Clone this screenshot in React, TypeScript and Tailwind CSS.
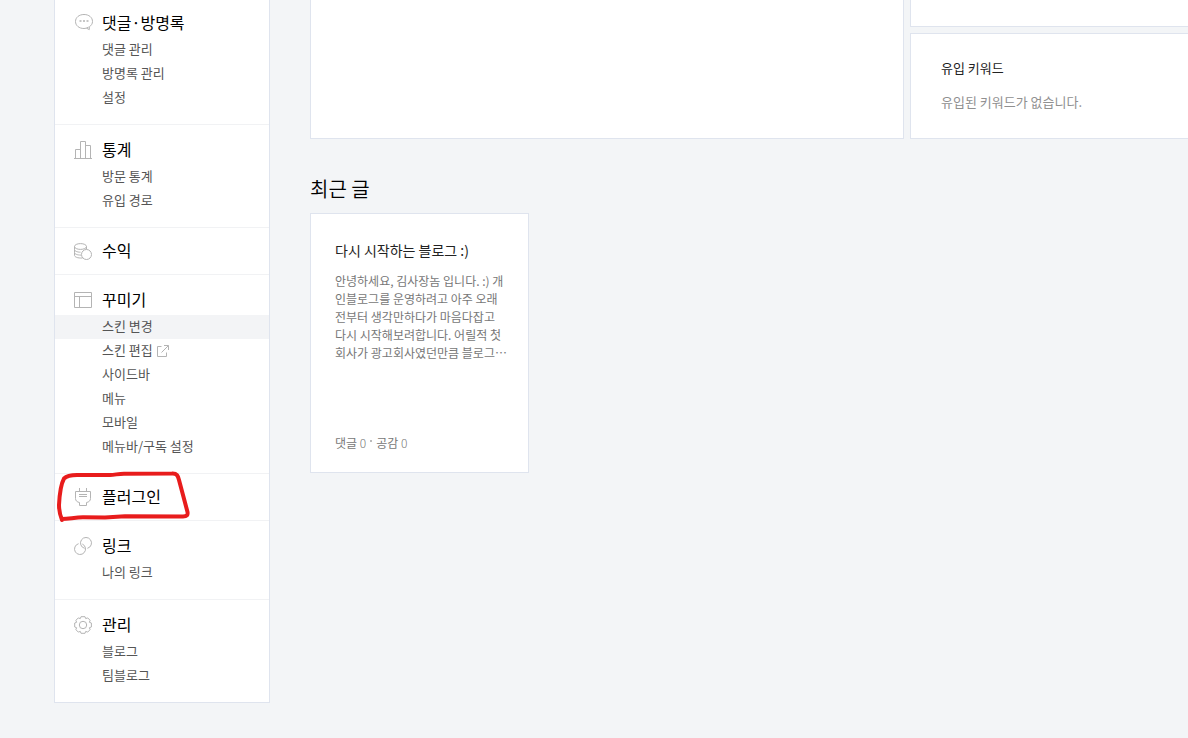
import type { ReactNode } from 'react'
import clsx from 'clsx'

type MenuItem = {
  label: string
  active?: boolean
  external?: boolean
}

type MenuGroup = {
  title: string
  icon: ReactNode
  items: MenuItem[]
  marked?: boolean
}

const Icon = ({ children }: { children: ReactNode }) => (
  <svg
    width="18"
    height="18"
    viewBox="0 0 18 18"
    fill="none"
    stroke="#b4b4b4"
    aria-hidden="true"
    className="shrink-0 overflow-visible"
  >
    {children}
  </svg>
)

const CommentIcon = () => (
  <Icon>
    <path d="M14.6 13.1C13.1 14 11.6 14.5 10 14.5C5 14.5 1.500 11.500 1.500 7.500C1.500 3.500 5 .5 10 .5C15 .5 18.500 3.500 18.500 7.500C18.500 9.800 17.300 11.500 15.300 12.800V15.600L12.500 14.200" />
    <path d="M5.500 7h2M9 7h2M12.500 7h2" strokeWidth="1.5" />
  </Icon>
)

const StatsIcon = () => (
  <Icon>
    <path d="M0 17.5h18M1.5 17.5v-9h5M6.5 17.5v-17h5v17M11.5 4.500h5v13" />
  </Icon>
)

const CoinsIcon = () => (
  <Icon>
    <ellipse cx="6.5" cy="4.5" rx="6" ry="2.9" />
    <path d="M.5 4.500v3c0 1.500 2.700 2.700 6 2.700M12.500 4.500v2.500" />
    <path d="M.5 7.500v3c0 1.400 2.600 2.600 6.500 2.600M.5 10.500v2.800c0 1.600 3 3 8 2.700" />
    <circle cx="12.5" cy="12.500" r="5" />
  </Icon>
)

const LayoutIcon = () => (
  <Icon>
    <path d="M.5 1.5h17v15H.5zM.5 5.5h17M5.5 5.5v11" />
  </Icon>
)

const PlugIcon = () => (
  <Icon>
    <path d="M5.5 0v3.5M12.5 0v3.5M1.5 3.5h15v7c0 2.200-1.600 3.600-4 4v3h-7v-3c-2.400-.4-4-1.800-4-4zM5 6.5h8M5 8.5h8" />
  </Icon>
)

const LinkIcon = () => (
  <Icon>
    <path d="M10.600 11.300A5.500 5.500 0 1 1 13.400 11.300" />
    <path d="M8.300 7A5.500 5.500 0 1 1 4.600 6.700" />
  </Icon>
)

const GearIcon = () => (
  <Icon>
    <path
      strokeLinejoin="round"
      d="M7 .7h4l.7 1.9 2-.7 2.4 2.4-.7 2 2 .7v4l-2 .7.7 2-2.4 2.4-2-.7-.7 1.9H7l-.7-1.9-2 .7-2.4-2.4.7-2L.7 11V7l1.9-.7-.7-2 2.4-2.4 2 .7z"
    />
    <circle cx="9" cy="9" r="3.7" />
  </Icon>
)

const ExternalIcon = () => (
  <svg width="12" height="12" viewBox="0 0 12 12" fill="none" stroke="#b4b4b4" aria-hidden="true">
    <path d="M4.5 1.5h-4v10h9v-4M7 .5h4.5V5M11.3.7L4.5 7.5" />
  </svg>
)

const menu: MenuGroup[] = [
  {
    title: '댓글·방명록',
    icon: <CommentIcon />,
    items: [{ label: '댓글 관리' }, { label: '방명록 관리' }, { label: '설정' }],
  },
  {
    title: '통계',
    icon: <StatsIcon />,
    items: [{ label: '방문 통계' }, { label: '유입 경로' }],
  },
  { title: '수익', icon: <CoinsIcon />, items: [] },
  {
    title: '꾸미기',
    icon: <LayoutIcon />,
    items: [
      { label: '스킨 변경', active: true },
      { label: '스킨 편집', external: true },
      { label: '사이드바' },
      { label: '메뉴' },
      { label: '모바일' },
      { label: '메뉴바/구독 설정' },
    ],
  },
  { title: '플러그인', icon: <PlugIcon />, items: [], marked: true },
  { title: '링크', icon: <LinkIcon />, items: [{ label: '나의 링크' }] },
  {
    title: '관리',
    icon: <GearIcon />,
    items: [{ label: '블로그' }, { label: '팀블로그' }],
  },
]

/* Hand-drawn red outline around a menu entry */
const Marker = () => (
  <svg
    width="140"
    height="60"
    viewBox="0 0 140 60"
    fill="none"
    stroke="#e81c1c"
    strokeWidth="4"
    strokeLinecap="round"
    strokeLinejoin="round"
    aria-hidden="true"
    className="pointer-events-none absolute -top-1.5 left-0 z-10"
  >
    <path d="M7 52C5 47 4 42 4 37C4.500 27 6 16 9 10.500C12 7.500 16 7 22 7L55 7C60 7 63 5.700 69 5.700L117 5.500C122 5.200 123 8 124 12L128 27L132.500 44C133 47 132 48.500 128 48.500L70 48.200L50 49.500L28 49.300C20 49.300 14 51 7 51" />
  </svg>
)

const MenuSection = ({ group }: { group: MenuGroup }) => {
  const hasItems = group.items.length > 0

  return (
    <li className="relative border-b border-[#f1f2f4] last:border-b-0">
      <a
        href="#"
        className={clsx(
          'flex items-center gap-2.5 pl-[19px] text-base text-black',
          hasItems ? 'h-10 pt-3 pb-0.5' : 'h-[46px]',
        )}
      >
        {group.icon}
        <span className="pb-0.5">{group.title}</span>
      </a>
      {hasItems && (
        <ul className="pb-3.5">
          {group.items.map((item) => (
            <li key={item.label}>
              <a
                href="#"
                className={clsx(
                  'flex h-6 items-center gap-1 pl-[47px] text-[13px] text-[#555]',
                  item.active && 'bg-[#f3f4f6]',
                )}
              >
                <span className="pb-0.5">{item.label}</span>
                {item.external && <ExternalIcon />}
              </a>
            </li>
          ))}
        </ul>
      )}
      {group.marked && <Marker />}
    </li>
  )
}

const App = () => {
  return (
    <div className="flex min-h-screen items-start gap-10 overflow-hidden bg-[#f3f5f7] pl-[54px] font-['Noto_Sans_CJK_KR','Noto_Sans',sans-serif]">
      <nav className="-mt-0.5 w-[216px] shrink-0 border-x border-b border-[#dfe4ee] bg-white">
        <ul>
          {menu.map((group) => (
            <MenuSection key={group.title} group={group} />
          ))}
        </ul>
      </nav>

      <main className="min-w-0 flex-1">
        <div className="flex gap-1.5">
          <section className="flex-1 border-x border-b border-[#dfe4ee] bg-white" />
          <div className="flex w-[278px] shrink-0 flex-col gap-1.5">
            <section className="h-[27px] border-b border-l border-[#dfe4ee] bg-white" />
            <section className="border-y border-l border-[#dfe4ee] bg-white px-[30px] pt-[22px] pb-6 text-[13px] leading-6">
              <h3 className="text-[#222]">유입 키워드</h3>
              <p className="pt-2.5 text-[#909090]">유입된 키워드가 없습니다.</p>
            </section>
          </div>
        </div>

        <h2 className="pt-9 text-xl leading-7 font-[350] text-black">최근 글</h2>

        <article className="mt-2.5 flex h-[260px] w-[219px] flex-col border border-[#dfe4ee] bg-white pt-6 pr-4 pb-5 pl-6">
          <h3 className="text-sm leading-6 text-[#222]">
            <a href="#">다시 시작하는 블로그 :)</a>
          </h3>
          <p className="mt-2.5 text-xs leading-[18px] text-[#777]">
            안녕하세요, 김사장놈 입니다. :) 개<br />
            인블로그를 운영하려고 아주 오래
            <br />
            전부터 생각만하다가 마음다잡고
            <br />
            다시 시작해보려합니다. 어릴적 첫<br />
            회사가 광고회사였던만큼 블로그…
          </p>
          <div className="mt-auto flex items-center gap-1 text-xs leading-[18px] text-[#777]">
            <span>
              댓글 <span className="font-light">0</span>
            </span>
            <span className="mb-1 size-0.5 bg-[#bbb]" />
            <span>
              공감 <span className="font-light">0</span>
            </span>
          </div>
        </article>
      </main>
    </div>
  )
}

export default App
